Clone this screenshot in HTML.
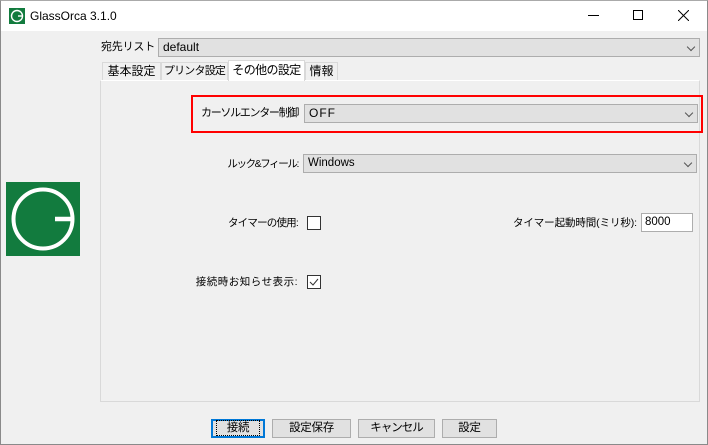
<!DOCTYPE html>
<html><head><meta charset="utf-8"><style>
*{box-sizing:border-box;margin:0;padding:0}
body{width:708px;height:445px;background:#f0f0f0;position:relative;overflow:hidden;font-family:"Liberation Sans","Noto Sans CJK JP",sans-serif;font-size:12px;color:#000}
.a{position:absolute}
.win{left:0;top:0;width:708px;height:445px;border:1px solid #8a8a8a;border-top:1px solid #aaa}
.title{left:1px;top:1px;width:706px;height:30px;background:#fff}
.combo{background:#e1e1e1;border:1px solid #adadad;height:19px;line-height:17px;padding-left:4px;font-size:12px}
.chev{position:absolute;right:5px;top:5px;width:6px;height:6px;border-right:1px solid #555;border-bottom:1px solid #555;transform:rotate(45deg)}
.lbl{font-size:12px;white-space:nowrap;line-height:14px}
.r{text-align:right;right:410px;font-size:10.5px;letter-spacing:-0.4px}
.tab{top:62px;height:18px;border:1px solid #d9d9d9;border-bottom:none;background:#f0f0f0;line-height:16px;text-align:center;font-size:11px;white-space:nowrap;overflow:hidden;letter-spacing:-0.6px}
.cb{width:14px;height:14px;border:1px solid #333;background:#fff}
.btn{top:419px;height:19px;background:#e1e1e1;border:1px solid #adadad;text-align:center;line-height:17px;font-size:11.5px;white-space:nowrap;letter-spacing:-0.3px}
</style></head><body>
<div class="a win"></div>
<div class="a title"></div>
<div class="a" style="left:9px;top:8px;width:16px;height:16px;background:#127b3e"><svg width="16" height="16"><circle cx="8" cy="8" r="5.5" fill="none" stroke="#fff" stroke-width="1.4"/><line x1="9" y1="8" x2="13.5" y2="8" stroke="#fff" stroke-width="1.4"/></svg></div>
<div class="a lbl" style="left:30px;top:9px;font-size:12px">GlassOrca 3.1.0</div>
<div class="a" style="left:588px;top:15px;width:11px;height:1px;background:#000"></div>
<div class="a" style="left:633px;top:10px;width:10px;height:10px;border:1px solid #000"></div>
<svg class="a" style="left:678px;top:10px" width="11" height="11"><path d="M0 0L11 11M11 0L0 11" stroke="#000" stroke-width="1"/></svg>

<div class="a" style="left:6px;top:182px;width:74px;height:74px;background:#127b3e"><svg width="74" height="74"><circle cx="37" cy="37" r="29.5" fill="none" stroke="#fff" stroke-width="4"/><line x1="49" y1="37" x2="68" y2="37" stroke="#fff" stroke-width="4.5"/></svg></div>

<div class="a lbl" style="left:101px;top:40px;font-size:11px;letter-spacing:-0.2px">宛先リスト</div>
<div class="a combo" style="left:158px;top:38px;width:542px">default<div class="chev"></div></div>

<div class="a tab" style="left:102px;width:59px;font-size:12px;letter-spacing:0">基本設定</div>
<div class="a tab" style="left:161px;width:67px;letter-spacing:-0.8px">プリンタ設定</div>
<div class="a tab" style="left:228px;top:60px;height:21px;width:77px;background:#fff;z-index:2;line-height:18px;font-size:12px;letter-spacing:-0.6px">その他の設定</div>
<div class="a tab" style="left:305px;width:33px;font-size:12px;letter-spacing:0">情報</div>
<div class="a" style="left:100px;top:80px;width:600px;height:322px;border:1px solid #d9d9d9;border-top-color:#fff"></div>

<div class="a" style="left:191px;top:95px;width:512px;height:38px;border:2px solid #f00"></div>
<div class="a lbl" style="left:201px;top:106px;font-size:11px;letter-spacing:-1.3px">カーソルエンター制御</div>
<div class="a combo" style="left:304px;top:104px;width:394px;letter-spacing:1px">OFF<div class="chev"></div></div>

<div class="a lbl r" style="top:157px;letter-spacing:-1.4px">ルック&amp;フィール:</div>
<div class="a combo" style="left:303px;top:154px;width:394px;font-size:11.5px">Windows<div class="chev"></div></div>

<div class="a lbl r" style="top:216px;letter-spacing:-0.8px">タイマーの使用:</div>
<div class="a cb" style="left:307px;top:216px"></div>
<div class="a lbl" style="right:71px;top:216px;font-size:10.5px;letter-spacing:-0.1px">タイマー起動時間(ミリ秒):</div>
<div class="a" style="left:641px;top:213px;width:52px;height:19px;background:#fff;border:1px solid #adadad;line-height:17px;padding-left:3px;font-size:11.5px">8000</div>

<div class="a lbl r" style="top:275px;letter-spacing:0.5px">接続時お知らせ表示:</div>
<div class="a cb" style="left:307px;top:275px"><svg width="12" height="12" style="position:absolute;left:0;top:0"><path d="M2 6L5 9L10 3" stroke="#333" fill="none" stroke-width="1"/></svg></div>

<div class="a btn" style="left:211px;width:54px;border:2px solid #0078d7;line-height:15px"><span style="outline:1px dotted #000;outline-offset:1px;padding:0 9px">接続</span></div>
<div class="a btn" style="left:272px;width:79px">設定保存</div>
<div class="a btn" style="left:358px;width:77px;letter-spacing:-1px">キャンセル</div>
<div class="a btn" style="left:442px;width:55px">設定</div>
</body></html>
